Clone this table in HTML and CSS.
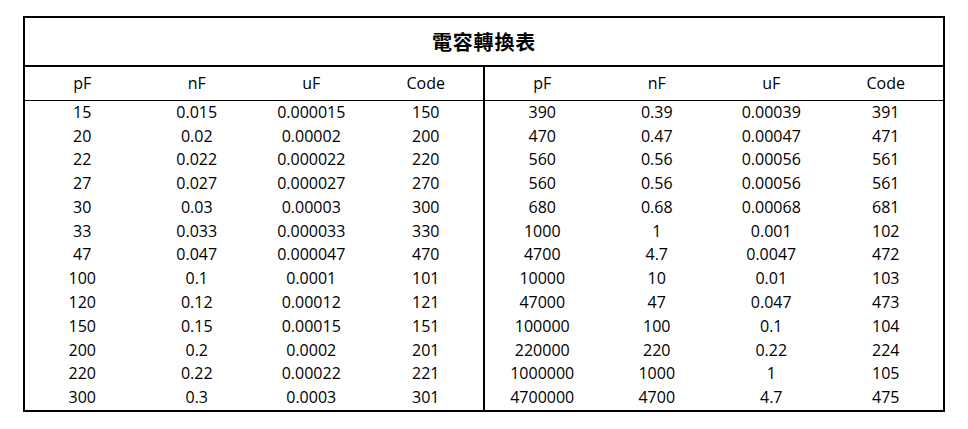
FILE: index.html
```html
<!DOCTYPE html>
<html lang="zh-Hant">
<head>
<meta charset="utf-8">
<title>電容轉換表</title>
<link rel="stylesheet" href="styles.css">
</head>
<body>
<div class="sheet">
  <div class="title">電容轉換表</div>
  <div class="halves">
    <div class="half">
      <div class="row head"><span>pF</span><span>nF</span><span>uF</span><span>Code</span></div>
      <div class="rows">
        <div class="row"><span>15</span><span>0.015</span><span>0.000015</span><span>150</span></div>
        <div class="row"><span>20</span><span>0.02</span><span>0.00002</span><span>200</span></div>
        <div class="row"><span>22</span><span>0.022</span><span>0.000022</span><span>220</span></div>
        <div class="row"><span>27</span><span>0.027</span><span>0.000027</span><span>270</span></div>
        <div class="row"><span>30</span><span>0.03</span><span>0.00003</span><span>300</span></div>
        <div class="row"><span>33</span><span>0.033</span><span>0.000033</span><span>330</span></div>
        <div class="row"><span>47</span><span>0.047</span><span>0.000047</span><span>470</span></div>
        <div class="row"><span>100</span><span>0.1</span><span>0.0001</span><span>101</span></div>
        <div class="row"><span>120</span><span>0.12</span><span>0.00012</span><span>121</span></div>
        <div class="row"><span>150</span><span>0.15</span><span>0.00015</span><span>151</span></div>
        <div class="row"><span>200</span><span>0.2</span><span>0.0002</span><span>201</span></div>
        <div class="row"><span>220</span><span>0.22</span><span>0.00022</span><span>221</span></div>
        <div class="row"><span>300</span><span>0.3</span><span>0.0003</span><span>301</span></div>
      </div>
    </div>
    <div class="half">
      <div class="row head"><span>pF</span><span>nF</span><span>uF</span><span>Code</span></div>
      <div class="rows">
        <div class="row"><span>390</span><span>0.39</span><span>0.00039</span><span>391</span></div>
        <div class="row"><span>470</span><span>0.47</span><span>0.00047</span><span>471</span></div>
        <div class="row"><span>560</span><span>0.56</span><span>0.00056</span><span>561</span></div>
        <div class="row"><span>560</span><span>0.56</span><span>0.00056</span><span>561</span></div>
        <div class="row"><span>680</span><span>0.68</span><span>0.00068</span><span>681</span></div>
        <div class="row"><span>1000</span><span>1</span><span>0.001</span><span>102</span></div>
        <div class="row"><span>4700</span><span>4.7</span><span>0.0047</span><span>472</span></div>
        <div class="row"><span>10000</span><span>10</span><span>0.01</span><span>103</span></div>
        <div class="row"><span>47000</span><span>47</span><span>0.047</span><span>473</span></div>
        <div class="row"><span>100000</span><span>100</span><span>0.1</span><span>104</span></div>
        <div class="row"><span>220000</span><span>220</span><span>0.22</span><span>224</span></div>
        <div class="row"><span>1000000</span><span>1000</span><span>1</span><span>105</span></div>
        <div class="row"><span>4700000</span><span>4700</span><span>4.7</span><span>475</span></div>
      </div>
    </div>
  </div>
</div>
</body>
</html>
```

FILE: styles.css
```css
html, body {
  margin: 0;
  padding: 0;
  background: #ffffff;
}

body {
  font-family: "Open Sans", "Noto Sans", "Noto Sans CJK TC", sans-serif;
  color: #000000;
}

.sheet {
  box-sizing: border-box;
  width: 922px;
  height: 396px;
  margin: 16px 0 0 23px;
  border: 2px solid #000000;
  display: flex;
  flex-direction: column;
}

.title {
  height: 47px;
  border-bottom: 2px solid #000000;
  display: flex;
  align-items: center;
  justify-content: center;
  font-family: "Noto Sans CJK TC", "Noto Sans CJK SC", sans-serif;
  font-weight: 700;
  font-size: 20px;
  letter-spacing: 0.8px;
}

.halves {
  flex: 1;
  display: grid;
  grid-template-columns: 458px 458px;
  column-gap: 2px;
  background: #000000;
}

.half {
  background: #ffffff;
  display: flex;
  flex-direction: column;
}

.row {
  display: grid;
  grid-template-columns: repeat(4, 1fr);
  align-items: center;
  font-size: 16px;
  line-height: 20px;
}

.row span {
  text-align: center;
  padding-bottom: 2px;
}

.row.head {
  height: 33px;
  border-bottom: 1px solid #000000;
}

.rows {
  flex: 1;
  display: grid;
  grid-template-rows: repeat(13, 1fr);
}
```
